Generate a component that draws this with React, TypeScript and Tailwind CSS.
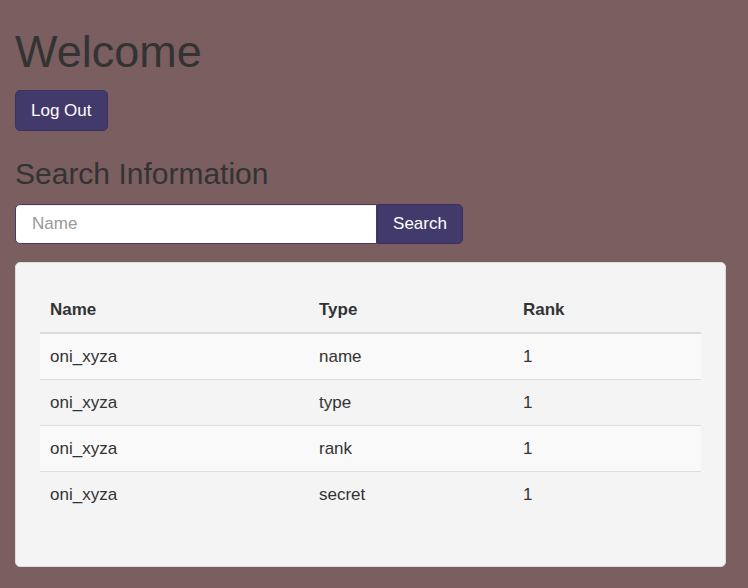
const rows = [
  { name: "oni_xyza", type: "name", rank: 1 },
  { name: "oni_xyza", type: "type", rank: 1 },
  { name: "oni_xyza", type: "rank", rank: 1 },
  { name: "oni_xyza", type: "secret", rank: 1 },
]

export default function App() {
  return (
    <div className="min-h-[588px] bg-[#7b5e5f] px-[15px] pt-[28px] pb-[22px] font-['Liberation_Sans',Arial,sans-serif] text-[#333]">
      <h1 className="text-[45px] leading-[48px] font-normal">Welcome</h1>
      <button className="mt-[14px] h-[41px] px-[15px] rounded-[5px] border border-[#3a325f] bg-[#433a6c] text-[17px] text-white">
        Log Out
      </button>
      <h3 className="mt-[26px] text-[30px] leading-[33px] font-normal">Search Information</h3>
      <div className="mt-[14px] flex h-[40px] w-[448px]">
        <input
          placeholder="Name"
          className="h-full w-[362px] rounded-l-[5px] border border-[#433a6c] bg-white px-[16px] text-[17px] text-[#555] placeholder:text-[#999] shadow-[inset_0_1px_1px_rgba(0,0,0,0.075)] outline-none"
        />
        <button className="h-full w-[86px] rounded-r-[5px] border border-[#3a325f] bg-[#433a6c] text-[17px] text-white">
          Search
        </button>
      </div>
      <div className="mt-[18px] w-[711px] rounded-[5px] border border-[#dcdcdc] bg-[#f4f4f4] px-[24px] pt-[24px] pb-[49px]">
        <table className="w-full border-collapse text-left text-[17px]">
          <thead>
            <tr>
              <th className="w-[269px] border-b-2 border-[#ddd] px-[10px] pt-[11px] pb-[10px] leading-[24px] font-bold">Name</th>
              <th className="w-[204px] border-b-2 border-[#ddd] px-[10px] pt-[11px] pb-[10px] leading-[24px] font-bold">Type</th>
              <th className="border-b-2 border-[#ddd] px-[10px] pt-[11px] pb-[10px] leading-[24px] font-bold">Rank</th>
            </tr>
          </thead>
          <tbody>
            {rows.map((r, i) => (
              <tr key={i} className={i % 2 === 0 ? "bg-[#f9f9f9]" : ""}>
                <td className={`px-[10px] pt-[11px] pb-[10px] leading-[24px] ${i > 0 ? "border-t border-[#ddd]" : ""}`}>{r.name}</td>
                <td className={`px-[10px] pt-[11px] pb-[10px] leading-[24px] ${i > 0 ? "border-t border-[#ddd]" : ""}`}>{r.type}</td>
                <td className={`px-[10px] pt-[11px] pb-[10px] leading-[24px] ${i > 0 ? "border-t border-[#ddd]" : ""}`}>{r.rank}</td>
              </tr>
            ))}
          </tbody>
        </table>
      </div>
    </div>
  )
}
